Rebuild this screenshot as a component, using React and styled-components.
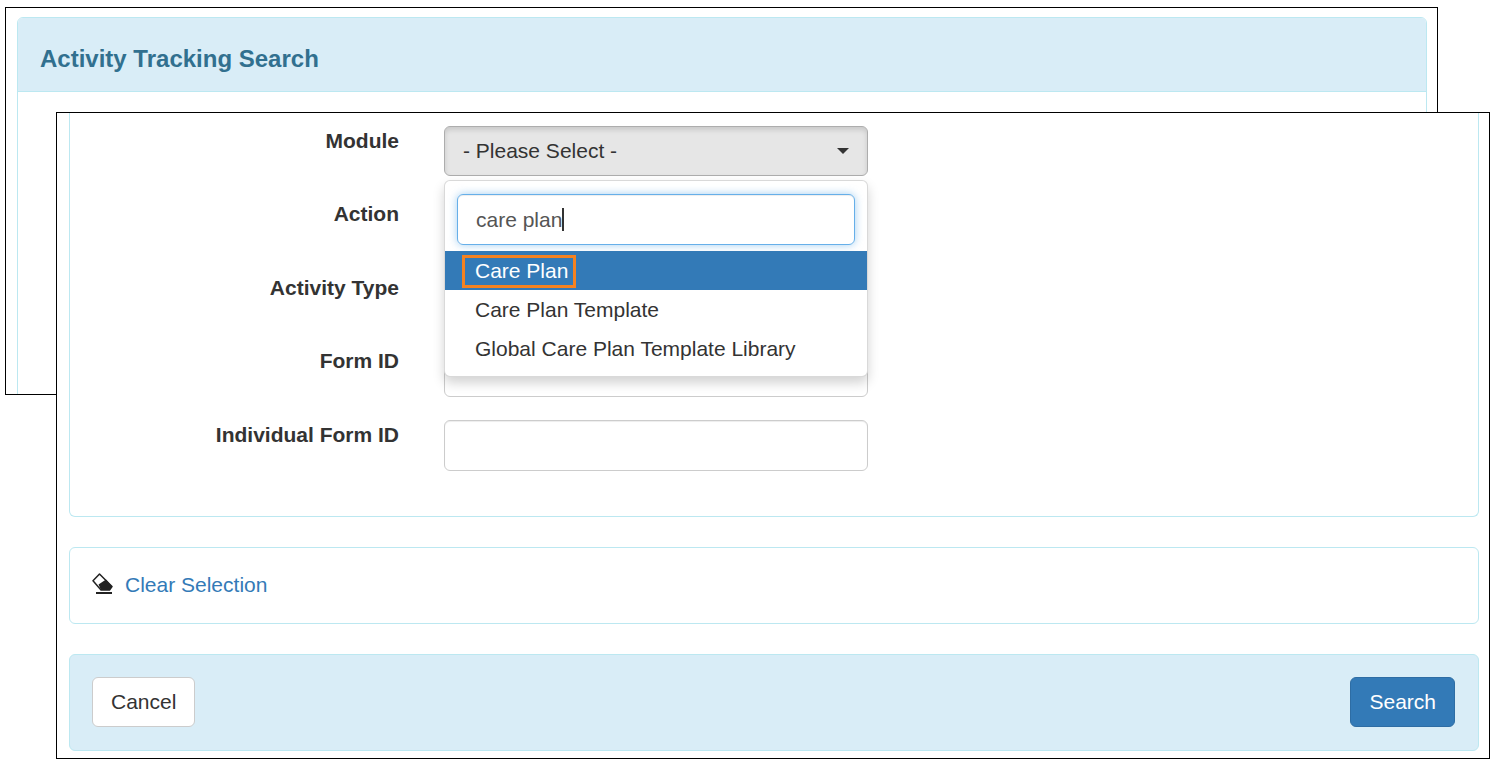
import React from "react";
import styled, { createGlobalStyle } from "styled-components";

const Global = createGlobalStyle`
  html, body { margin: 0; padding: 0; background: #fff; }
  body { font-family: "Liberation Sans", Arial, sans-serif; color: #333; font-size: 21px; }
`;

const Canvas = styled.div`
  position: relative;
  width: 1500px;
  height: 765px;
  overflow: hidden;
`;

const BackWindow = styled.section`
  position: absolute;
  left: 5px;
  top: 7px;
  width: 1433px;
  height: 388px;
  box-sizing: border-box;
  border: 1px solid #000;
  background: #fff;
  padding: 9px 10px 0 11px;
  overflow: hidden;
`;

const BackPanel = styled.div`
  height: 400px;
  border: 1px solid #bce8f1;
  border-radius: 6px 6px 0 0;
`;

const PanelHeading = styled.header`
  height: 74px;
  display: flex;
  align-items: center;
  box-sizing: border-box;
  padding: 8px 22px 0;
  background: #d9edf7;
  border-bottom: 1px solid #bce8f1;
  border-radius: 5px 5px 0 0;
`;

const Title = styled.h1`
  margin: 0;
  font-size: 24px;
  font-weight: 700;
  color: #31708f;
`;

const FrontWindow = styled.section`
  position: absolute;
  left: 56px;
  top: 112px;
  width: 1434px;
  height: 647px;
  box-sizing: border-box;
  border: 1px solid #000;
  background: #fff;
  padding: 0 10px 7px 12px;
  display: flex;
  flex-direction: column;
  gap: 30px;
`;

const FormPanel = styled.div`
  height: 405px;
  box-sizing: border-box;
  border: 1px solid #bce8f1;
  border-top: 0;
  border-radius: 0 0 6px 6px;
  padding-top: 13px;
`;

const FormGrid = styled.div`
  display: grid;
  grid-template-columns: 329px 424px;
  grid-template-rows: 50px 51px 50px 51px 51px;
  column-gap: 45px;
  row-gap: 23px;
`;

const Label = styled.label`
  font-weight: 700;
  font-size: 21px;
  line-height: 29px;
  text-align: right;
`;

const ControlCell = styled.div`
  position: relative;
`;

const SelectButton = styled.div`
  height: 50px;
  box-sizing: border-box;
  display: flex;
  align-items: center;
  justify-content: space-between;
  padding: 0 18px;
  background: #e6e6e6;
  border: 1px solid #adadad;
  border-radius: 6px;
  box-shadow: inset 0 3px 5px rgba(0, 0, 0, 0.125);
  font-size: 21px;
`;

const Caret = styled.span`
  width: 0;
  height: 0;
  border-left: 6px solid transparent;
  border-right: 6px solid transparent;
  border-top: 6px solid #333;
`;

const TextBox = styled.div`
  height: 51px;
  box-sizing: border-box;
  background: #fff;
  border: 1px solid #ccc;
  border-radius: 6px;
  box-shadow: inset 0 1px 1px rgba(0, 0, 0, 0.075);
`;

const Dropdown = styled.div`
  position: absolute;
  left: 0;
  top: 54px;
  width: 424px;
  height: 197px;
  box-sizing: border-box;
  z-index: 5;
  background: #fff;
  border: 1px solid rgba(0, 0, 0, 0.15);
  border-radius: 6px;
  box-shadow: 0 6px 12px rgba(0, 0, 0, 0.175);
  padding-top: 13px;
`;

const SearchBox = styled.div`
  height: 51px;
  width: 398px;
  margin: 0 0 6px 12px;
  box-sizing: border-box;
  display: flex;
  align-items: center;
  padding-left: 18px;
  border: 1px solid #66afe9;
  border-radius: 6px;
  color: #555;
  font-size: 21px;
  box-shadow: inset 0 1px 1px rgba(0, 0, 0, 0.075), 0 0 8px rgba(102, 175, 233, 0.6);
`;

const TextCursor = styled.span`
  width: 2px;
  height: 23px;
  background: #333;
`;

const OptionList = styled.ul`
  list-style: none;
  margin: 0;
  padding: 0;
`;

const Option = styled.li`
  position: relative;
  height: 39px;
  line-height: 39px;
  padding-left: 30px;
  font-size: 21px;
  background: ${(p) => (p.$active ? "#337ab7" : "transparent")};
  color: ${(p) => (p.$active ? "#fff" : "#333")};
`;

const Highlight = styled.span`
  position: absolute;
  left: 17px;
  top: 4px;
  width: 114px;
  height: 33px;
  box-sizing: border-box;
  border: 3px solid #f58220;
`;

const ClearPanel = styled.div`
  height: 77px;
  box-sizing: border-box;
  border: 1px solid #bce8f1;
  border-radius: 6px;
  display: flex;
  align-items: center;
  padding: 0 0 2px 22px;
  gap: 12px;
`;

const ClearLink = styled.a`
  color: #337ab7;
  font-size: 21px;
`;

const IconWrap = styled.svg`
  width: 21px;
  height: 21px;
  margin-bottom: 2px;
`;

const FooterPanel = styled.div`
  height: 97px;
  box-sizing: border-box;
  background: #d9edf7;
  border: 1px solid #bce8f1;
  border-radius: 6px;
  display: flex;
  align-items: center;
  justify-content: space-between;
  padding: 0 23px 2px 22px;
`;

const Button = styled.button`
  height: 50px;
  box-sizing: border-box;
  padding: 0 18px;
  border-radius: 6px;
  font: 21px "Liberation Sans", Arial, sans-serif;
  border: 1px solid ${(p) => (p.$primary ? "#2e6da4" : "#ccc")};
  background: ${(p) => (p.$primary ? "#337ab7" : "#fff")};
  color: ${(p) => (p.$primary ? "#fff" : "#333")};
`;

const EraserIcon = () => (
  <IconWrap viewBox="0 0 21 21" aria-hidden="true">
    <path d="M7.5 1 L1 7.8 L9 17 L17.5 17 L20 13.5 Z" fill="#fff" stroke="#222" strokeWidth="1.5" strokeLinejoin="round" />
    <path d="M6.5 11.5 L14 6.5 L20 13.5 L17.5 17 L9 17 Z" fill="#222" />
    <rect x="4" y="19" width="16" height="2" fill="#222" />
  </IconWrap>
);

const rows = ["Module", "Action", "Activity Type", "Form ID", "Individual Form ID"];

export default function App() {
  return (
    <Canvas>
      <Global />
      <BackWindow>
        <BackPanel>
          <PanelHeading>
            <Title>Activity Tracking Search</Title>
          </PanelHeading>
        </BackPanel>
      </BackWindow>
      <FrontWindow>
        <FormPanel>
          <FormGrid>
            {rows.map((label, i) => (
              <React.Fragment key={label}>
                <Label>{label}</Label>
                <ControlCell>
                  {i === 0 ? (
                    <>
                      <SelectButton>
                        <span>- Please Select -</span>
                        <Caret />
                      </SelectButton>
                      <Dropdown>
                        <SearchBox>
                          care plan
                          <TextCursor />
                        </SearchBox>
                        <OptionList>
                          <Option $active>
                            Care Plan
                            <Highlight />
                          </Option>
                          <Option>Care Plan Template</Option>
                          <Option>Global Care Plan Template Library</Option>
                        </OptionList>
                      </Dropdown>
                    </>
                  ) : (
                    <TextBox />
                  )}
                </ControlCell>
              </React.Fragment>
            ))}
          </FormGrid>
        </FormPanel>
        <ClearPanel>
          <EraserIcon />
          <ClearLink>Clear Selection</ClearLink>
        </ClearPanel>
        <FooterPanel>
          <Button>Cancel</Button>
          <Button $primary>Search</Button>
        </FooterPanel>
      </FrontWindow>
    </Canvas>
  );
}
